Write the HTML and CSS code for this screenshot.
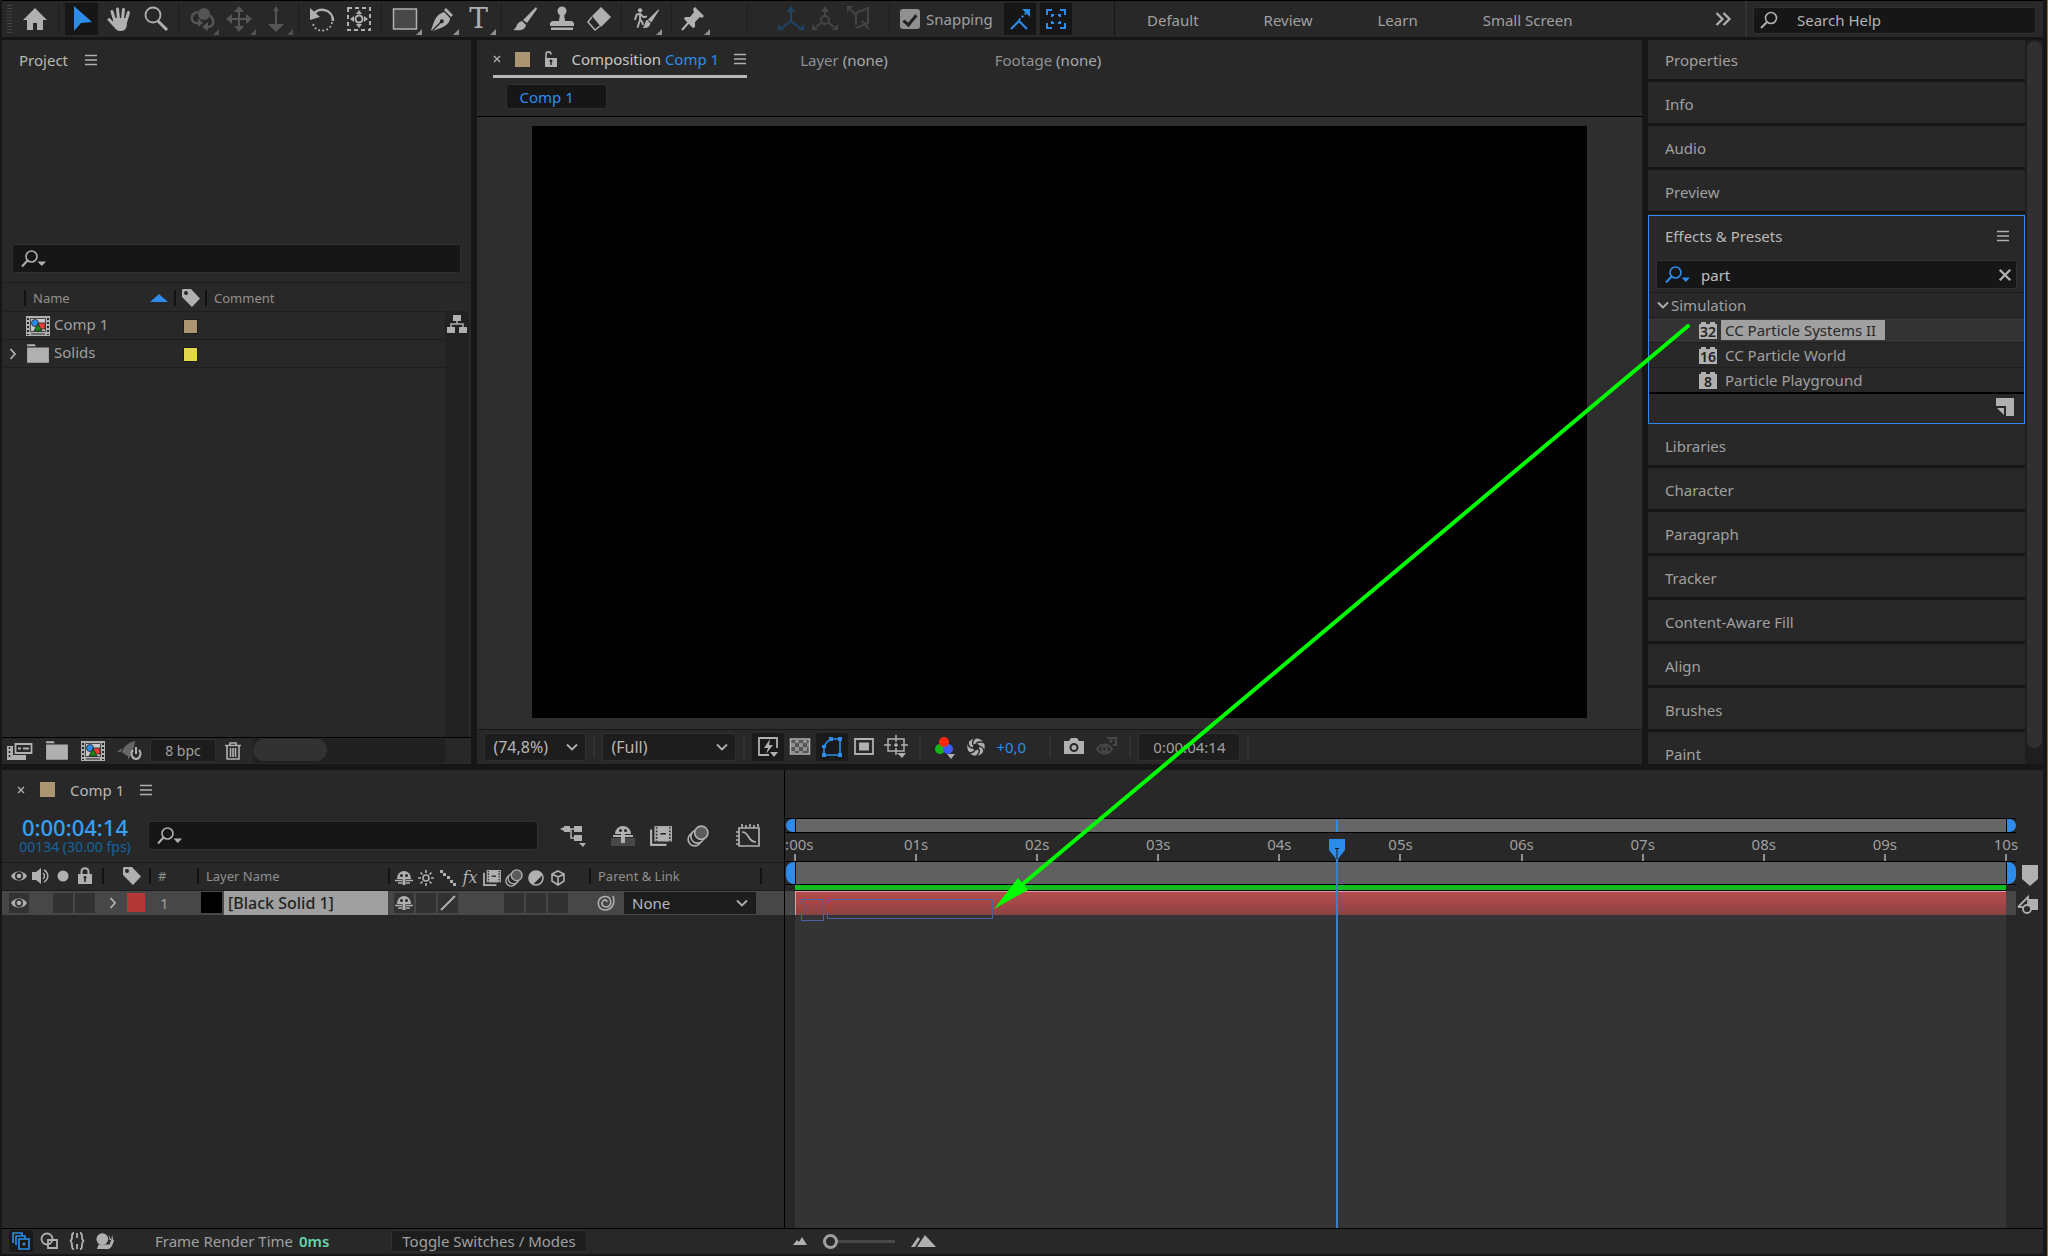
FILE: index.html
```
<!DOCTYPE html>
<html lang="en">
<head>
    <meta charset="UTF-8">
    <meta name="viewport" content="width=device-width, initial-scale=1.0">
    <title>Comp 1</title>
    <link rel="stylesheet" href="styles.css">
</head>
<body>

    <!-- shared icons -->
    <svg class="sprite" aria-hidden="true">
        <symbol id="i-search" viewBox="0 0 26 18">
            <circle cx="10.500" cy="6.500" r="5.500" fill="none" stroke="currentColor" stroke-width="1.600"/>
            <path d="M6.500 10.500 1 16.500" stroke="currentColor" stroke-width="2"/>
            <path d="M16.500 11.500h8.500l-4.200 4.500z" fill="currentColor"/>
        </symbol>
        <symbol id="i-menu" viewBox="0 0 14 12">
            <path d="M1 1.500h12M1 6h12M1 10.500h12" stroke="currentColor" stroke-width="1.600"/>
        </symbol>
        <symbol id="i-close" viewBox="0 0 8 8">
            <path d="M1 1l6 6M7 1 1 7" stroke="currentColor" stroke-width="1.400"/>
        </symbol>
        <symbol id="i-down" viewBox="0 0 12 8">
            <path d="M1 1.500l5 5 5-5" fill="none" stroke="currentColor" stroke-width="1.800"/>
        </symbol>
        <symbol id="i-right" viewBox="0 0 8 12">
            <path d="M1.500 1l4.500 5-4.500 5" fill="none" stroke="currentColor" stroke-width="1.800"/>
        </symbol>
        <symbol id="i-tag" viewBox="0 0 18 18">
            <path fill-rule="evenodd" d="M1 0h8l9 9.500-8 8.500-10-10V1zM4 2a2 2 0 1 0 0 4 2 2 0 0 0 0-4z" fill="currentColor"/>
        </symbol>
        <symbol id="i-folder" viewBox="0 0 22 18">
            <path d="M1 0h7l1 2H1zM1 3h20v14H1z" fill="currentColor"/>
        </symbol>
        <symbol id="i-comp" viewBox="0 0 24 20">
            <path d="M0 0h24v20H0z" fill="currentColor"/>
            <path d="M2 2v17M22 2v17" stroke="#282828" stroke-width="2" stroke-dasharray="2 2"/>
            <path d="M4.500 2.500h15v13h-15z" fill="#c8c8c8" stroke="#484848"/>
            <path d="M12 7h7v6h-7z" fill="#f43b35" stroke="#222" stroke-width=".800"/>
            <circle cx="9" cy="7" r="3.500" fill="#2d8ceb" stroke="#222" stroke-width=".800"/>
            <path d="M12 7.500l4 7.500H8z" fill="#128a12" stroke="#222" stroke-width=".800"/>
            <path d="M5 18h14" stroke="#282828"/>
        </symbol>
        <symbol id="i-eye" viewBox="0 0 16 12">
            <path fill-rule="evenodd" d="M0 6c3-6 13-6 16 0-3 6-13 6-16 0zM8 2a4 4 0 1 0 0 8 4 4 0 0 0 0-8z" fill="currentColor"/>
            <circle cx="8" cy="6" r="2.300" fill="currentColor"/>
        </symbol>
        <symbol id="i-shy" viewBox="0 0 18 16">
            <path d="M2 9a7 8 0 0 1 14 0z" fill="currentColor"/>
            <circle cx="6.500" cy="5.500" r="1.500" fill="#282828"/>
            <circle cx="11.500" cy="5.500" r="1.500" fill="#282828"/>
            <path d="M0 10.500h7M11 10.500h7M3 13h4M11 13h4" stroke="currentColor" stroke-width="1.500"/>
            <path d="M7.500 8h3v7h-3z" fill="currentColor"/>
        </symbol>
        <symbol id="i-film" viewBox="0 0 20 18">
            <path d="M1 3v14h14" fill="none" stroke="currentColor" stroke-width="2"/>
            <path d="M4 0h16v14H4z" fill="currentColor"/>
            <path d="M6 1v13M18 1v13" stroke="#282828" stroke-width="1.500" stroke-dasharray="1.500 1.500"/>
            <path d="M9.500 7h5" stroke="#282828" stroke-width="1.500"/>
        </symbol>
        <symbol id="i-blur" viewBox="0 0 20 20">
            <g stroke="currentColor" stroke-width="1.500" fill="#282828">
                <circle cx="7" cy="13" r="6"/>
                <circle cx="9.500" cy="10.500" r="6"/>
                <circle cx="13" cy="7" r="6" fill="#5c5c5c"/>
            </g>
        </symbol>
    </svg>

    <header class="toolbar">
        <span class="grip"></span>
        <button class="tool home" aria-label="Home"><svg class="i26" viewBox="0 0 26 26"><path d="M13 2 1 14h4v10h6v-7h4v7h6V14h4z"/></svg></button>
        <div class="group">
            <button class="tool on" aria-label="Selection"><svg class="i26" viewBox="0 0 26 26"><path d="M5 0v25l7-8 11-1z"/></svg></button>
            <button class="tool" aria-label="Hand"><svg class="i26" viewBox="0 0 26 26"><path d="M7 12h14v5c0 5-2 8-6 8s-6-2-8-6z"/><path class="line round" stroke-width="3" d="M8.500 14 6 5.500M12.500 13 11.500 3M16.500 13l1-9.500M20 15l2.500-8.500M8 19l-5-5.500"/></svg></button>
            <button class="tool" aria-label="Zoom"><svg class="i26" viewBox="0 0 26 26"><circle class="line" cx="10" cy="9" r="7.500" stroke-width="1.800"/><path class="line" stroke-width="3" d="M15 15l9 9"/></svg></button>
        </div>
        <div class="group dim">
            <button class="tool more" aria-label="Orbit camera" disabled><svg class="i26" viewBox="0 0 26 26"><circle cx="15" cy="8" r="6"/><path class="line" stroke-width="2.500" d="M9 6c-7 1-8 8-3 11h5M20 9c6 4 6 12-2 12"/><path d="M9 12v9l5-4zM19 16v9l-6-4z"/></svg></button>
            <button class="tool more" aria-label="Pan camera" disabled><svg class="i26" viewBox="0 0 26 26"><path class="line" stroke-width="2" d="M13 3v20M3 13h20"/><path d="M13 0l5 6H8zM13 26l5-6H8zM0 13l6-5v10zM26 13l-6-5v10z"/></svg></button>
            <button class="tool more" aria-label="Dolly camera" disabled><svg class="i26" viewBox="0 0 26 26"><path class="line" stroke-width="2" d="M13 2v20"/><path d="M13 0l3 5h-6zM13 26l8-8H5z"/></svg></button>
        </div>
        <div class="group">
            <button class="tool" aria-label="Rotate"><svg class="i26" viewBox="0 0 26 26"><path class="line" stroke-width="2.500" d="M4 9c5-9 20-6 20 6"/><path d="M1 2v12l10-3z"/><path class="line round" stroke-width="2" stroke-dasharray="0.100 4" d="M23 17c-2 9-16 11-19 1"/></svg></button>
            <button class="tool" aria-label="Anchor point"><svg class="i26" viewBox="0 0 26 26"><path class="line" stroke-width="2" stroke-dasharray="4 3" d="M2 2h22v22H2z"/><circle class="line" cx="13" cy="13" r="3.500" stroke-width="2"/><path d="M13 4l3 4h-6zM13 22l3-4h-6zM4 13l4-3v6zM22 13l-4-3v6z"/></svg></button>
        </div>
        <div class="group">
            <button class="tool more" aria-label="Rectangle"><svg class="i26" viewBox="0 0 26 26"><path fill="#484848" stroke="currentColor" stroke-width="1.500" d="M1.500 3h23v20h-23z"/></svg></button>
            <button class="tool more" aria-label="Pen"><svg class="i26" viewBox="0 0 26 26"><path fill-rule="evenodd" d="M15 6l6 6c0 6-6 9-12 11l-5 2-1-1 8-8a2 2 0 1 1 1 1l-8 8-2-1c3-6 3-15 13-18zM17 2l7 7-2 2-7-7z"/></svg></button>
            <button class="tool more glyph" aria-label="Type">T</button>
        </div>
        <div class="group">
            <button class="tool" aria-label="Brush"><svg class="i26" viewBox="0 0 26 26"><path d="M24 1l1 2-10 14-4-3zM10 15l4 4c-1 5-6 6-13 5 4-1 3-8 9-9z"/></svg></button>
            <button class="tool" aria-label="Clone stamp"><svg class="i26" viewBox="0 0 26 26"><circle cx="13" cy="5" r="4.500"/><path d="M11 8h4l1 7h7l2 2v3H1v-3l2-2h7zM2 21.500h22V24H2z"/></svg></button>
            <button class="tool" aria-label="Eraser"><svg class="i26" viewBox="0 0 26 26"><path d="M15 1l10 10-10 10L6 10z"/><path class="line" stroke-width="1.500" d="M6 11l-4 5 7 8 5-4"/></svg></button>
        </div>
        <div class="group roto">
            <button class="tool more" aria-label="Roto brush"><svg class="i26" viewBox="0 0 30 26"><circle cx="7" cy="3" r="2.500"/><path class="line" stroke-width="2.200" d="M7 6v8l-3 9M8 14l3 6M1 14l2-6 4-1 4 4 4-1"/><path d="M28 2l1 1-9 14-4-3zM15 14l4 4c-1 5-5 6-9 5 3-1 2-7 5-9z"/></svg></button>
        </div>
        <div class="group pin">
            <button class="tool more" aria-label="Puppet pin"><svg class="i26" viewBox="0 0 26 26"><path d="M15 1l9 9-2 2-2-1-5 5v5l-2 1-9-9 1-2h5l4-5-1-3z"/><path class="line" stroke-width="2" d="M9 16l-7 8"/></svg></button>
        </div>
        <div class="group axes">
            <button class="tool axis-on" aria-label="Local axis" disabled><svg class="i26" viewBox="0 0 26 26"><path class="line" stroke-width="2" d="M13 4v11L4 22M13 15l9 7"/><path d="M13 0l4 6H9zM0 24v-6l6 6zM26 24v-6l-6 6z"/></svg></button>
            <button class="tool" aria-label="World axis" disabled><svg class="i26" viewBox="0 0 26 26"><path class="line" stroke-width="2" d="M13 4v6M9 17l-5 4M17 17l5 4"/><circle class="line" cx="13" cy="14" r="4" stroke-width="2"/><path d="M13 0l4 6H9zM0 24v-6l6 6zM26 24v-6l-6 6z"/></svg></button>
            <button class="tool" aria-label="View axis" disabled><svg class="i26" viewBox="0 0 26 26"><path class="line" stroke-width="2" d="M4 3l6 6v10M10 7l12-5v15l-12 5M16 15l7 8"/><path d="M1 0h6l-6 6z"/></svg></button>
        </div>
        <div class="group snapping">
            <label class="snap"><input type="checkbox" checked>Snapping</label>
            <button class="tool on" aria-label="Snap beyond edges"><svg class="i24" viewBox="0 0 24 24"><path class="line" stroke-width="2.200" d="M3 22l8-8 8 8"/><path class="line" stroke-width="2" stroke-dasharray="2 2" d="M11 13l8-8"/><path d="M14 2h8v8z"/></svg></button>
            <button class="tool on" aria-label="Snap to collapsed layers"><svg class="i24" viewBox="0 0 24 24"><path class="line" stroke-width="2" d="M3 8V3h5M16 3h5v5M21 16v5h-5M8 21H3v-5M8 10V8h2M14 8h2v2M16 14v2h-2M10 16H8v-2"/></svg></button>
        </div>
        <nav class="workspaces">
            <a href="#">Default</a>
            <a href="#">Review</a>
            <a href="#">Learn</a>
            <a href="#">Small Screen</a>
        </nav>
        <button class="overflow" aria-label="More workspaces"><svg width="16" height="14" viewBox="0 0 16 14"><path class="line" stroke-width="2.200" d="M1.500 1l6 6-6 6M8.500 1l6 6-6 6"/></svg></button>
        <div class="help-wrap">
            <label class="field help">
                <svg width="18" height="18" viewBox="0 0 18 18"><circle class="line" cx="11" cy="7" r="5.500" stroke-width="1.600"/><path class="line" stroke-width="2" d="M7 11l-6 6"/></svg>
                <input type="text" placeholder="Search Help" aria-label="Search Help">
            </label>
        </div>
    </header>

    <main class="upper">

        <section class="panel project">
            <h2 class="panel-title">Project <svg class="menu"><use href="#i-menu"/></svg></h2>
            <label class="field project-search"><svg class="search"><use href="#i-search"/></svg><input type="text" aria-label="Search project"></label>
            <div class="project-list">
                <table>
                    <thead>
                        <tr>
                            <th class="c-name"><span class="col">Name</span><svg width="18" height="8" viewBox="0 0 18 8"><path d="M0 8 9 0l9 8z" fill="#2d8ceb"/></svg></th>
                            <th class="c-tag"><span class="col"><svg class="i18"><use href="#i-tag"/></svg></span></th>
                            <th><span class="col">Comment</span></th>
                        </tr>
                    </thead>
                    <tbody>
                        <tr>
                            <td class="c-name"><svg class="type"><use href="#i-comp"/></svg>Comp 1</td>
                            <td class="c-tag"><span class="swatch"></span></td>
                            <td></td>
                        </tr>
                        <tr>
                            <td class="c-name folder"><svg class="twirl"><use href="#i-right"/></svg><svg class="type"><use href="#i-folder"/></svg>Solids</td>
                            <td class="c-tag"><span class="swatch yellow"></span></td>
                            <td></td>
                        </tr>
                    </tbody>
                </table>
                <div class="flow-col">
                    <button aria-label="Project flowchart"><svg width="20" height="18" viewBox="0 0 20 18"><path d="M6 0h8v6H6zM0 12h8v6H0zM12 12h8v6h-8z"/><path class="line" stroke-width="1.500" d="M10 6v3M4 12V9h12v3"/></svg></button>
                </div>
            </div>
            <div class="project-foot">
                <button aria-label="Interpret footage"><svg width="26" height="18" viewBox="0 0 26 18"><path d="M0 4h6v9h13v5H0z"/><path class="cut" stroke-width="1.500" stroke-dasharray="2 2" d="M2.500 5v12"/><path fill="#282828" stroke="currentColor" stroke-width="1.800" d="M8.500 2h16v9h-16z"/><path class="line" stroke-width="2" d="M11 6.500h3M16 6.500h6"/></svg></button>
                <button aria-label="New folder"><svg class="type"><use href="#i-folder"/></svg></button>
                <button aria-label="New composition"><svg class="type"><use href="#i-comp"/></svg></button>
                <button aria-label="Power"><svg width="26" height="20" viewBox="0 0 26 20"><path fill="#666" d="M18 0C11 2 6 6 5 11l5 4c5-2 7-7 8-15zM5 7l-5 4h4zM11 14v5l4-7z"/><path class="line" stroke-width="2" d="M16 9c-3 3-1 9 3 9s6-6 3-9M19 6v7"/></svg></button>
                <button class="box bpc">8 bpc</button>
                <button aria-label="Delete"><svg width="16" height="18" viewBox="0 0 16 18"><path class="line" stroke-width="1.600" d="M0 3.500h16M5 3V1h6v2M2 4v13h12V4M5.500 6v9M8 6v9M10.500 6v9"/></svg></button>
                <div class="hscroll"><span></span></div>
            </div>
        </section>

        <section class="panel comp">
            <div class="tabs">
                <div class="tab active">
                    <svg class="close"><use href="#i-close"/></svg>
                    <span class="swatch"></span>
                    <svg width="13" height="16" viewBox="0 0 13 16"><path class="line" stroke-width="1.600" d="M2 7V3.500C2 0 7 0 7 3.500"/><path fill-rule="evenodd" d="M1 7h12v9H1zM7 8.500a1.500 1.500 0 0 0-.700 2.800V14h1.400v-2.700A1.500 1.500 0 0 0 7 8.500z"/></svg>
                    <span>Composition <a href="#">Comp 1</a></span>
                    <svg class="menu"><use href="#i-menu"/></svg>
                </div>
                <div class="tab">Layer <b>(none)</b></div>
                <div class="tab">Footage <b>(none)</b></div>
            </div>
            <div class="crumbs"><button class="crumb">Comp 1</button></div>
            <div class="viewer"><div class="canvas"></div></div>
            <div class="viewer-bar">
                <span class="drop zoom"><select aria-label="Magnification"><option>(74,8%)</option></select><svg class="arrow"><use href="#i-down"/></svg></span>
                <i class="sep"></i>
                <span class="drop res"><select aria-label="Resolution"><option>(Full)</option></select><svg class="arrow"><use href="#i-down"/></svg></span>
                <i class="sep"></i>
                <div class="view-icons">
                    <button class="pressed" aria-label="Fast previews"><svg class="i24" viewBox="0 0 24 24"><path class="line" stroke-width="1.800" d="M13 20H3V3h18v10"/><path d="M14 4l-6 9h4l-2 6 7-9h-4zM14 17h8l-4 5z"/></svg></button>
                    <button aria-label="Transparency grid"><svg class="i24" viewBox="0 0 24 24"><path fill="#555" stroke="currentColor" stroke-width="1.600" d="M2.500 4h19v15h-19z"/><path fill="#909090" d="M7 4h4v4H7zM15 4h4v4h-4zM3 8h4v4H3zM11 8h4v4h-4zM19 8h2v4h-2zM7 12h4v4H7zM15 12h4v4h-4zM3 16h4v3H3zM11 16h4v3h-4z"/></svg></button>
                    <button class="pressed blue" aria-label="Mask visibility"><svg class="i24" viewBox="0 0 24 24"><path class="line" stroke-width="1.600" d="M4 20V12c2-5 5-7 8-8h8v16z"/><path d="M2 18h4v4H2zM18 18h4v4h-4zM18 2h4v4h-4zM9 2h4v4H9zM2 10h4v3H2z"/></svg></button>
                    <button aria-label="Region of interest"><svg class="i24" viewBox="0 0 24 24"><path class="line" stroke-width="1.800" d="M3 4h18v15H3z"/><path d="M7 7.500h10v8H7z"/></svg></button>
                    <button aria-label="Guides"><svg class="i24" viewBox="0 0 24 24"><path class="line" stroke-width="1.500" d="M4 4h16v12H4zM12 0v7M12 13v7M0 10h7M17 10h7M10 10h4M12 8v4"/><path d="M13 18h9l-4 5z"/></svg></button>
                </div>
                <i class="sep"></i>
                <div class="view-icons">
                    <button aria-label="Channels"><svg class="i24" viewBox="0 0 24 24"><circle cx="8" cy="14" r="5" fill="#17b517"/><circle cx="16" cy="14" r="5" fill="#3a5cff"/><circle cx="12" cy="7" r="5" fill="#ff2a0d"/><path d="M15 19h8l-4 5z"/></svg></button>
                    <button aria-label="Exposure"><svg class="i24" viewBox="0 0 24 24"><circle class="line" cx="12" cy="12" r="6" stroke-width="5.500"/><path class="cut" stroke-width="1.500" d="M13 2c-4 2-5 5-4 8M21 8c-4-2-8-1-9 1M20 17c0-4-3-6-6-6M11 22c3-2 5-5 4-8M3 17c4 2 7 0 8-2M4 7c0 4 2 6 5 6"/></svg></button>
                    <a class="exposure" href="#">+0,0</a>
                </div>
                <i class="sep"></i>
                <div class="view-icons">
                    <button aria-label="Snapshot"><svg class="i24" viewBox="0 0 24 24"><path fill-rule="evenodd" d="M2 6h5l2-3h6l2 3h5v13H2zM12 8a4.500 4.500 0 1 0 0 9 4.500 4.500 0 0 0 0-9zm0 2a2.500 2.500 0 1 1 0 5 2.500 2.500 0 0 1 0-5z"/></svg></button>
                    <button class="off" aria-label="Show snapshot" disabled><svg class="i24" viewBox="0 0 24 24"><path class="line" stroke-width="2" d="M3 14c4-6 11-6 15 0-4 6-11 6-15 0zM13 3h9v7h-3"/><circle class="line" cx="10.500" cy="14" r="2.500" stroke-width="2"/><circle cx="17" cy="6" r="1.800"/></svg></button>
                </div>
                <i class="sep"></i>
                <button class="box time">0:00:04:14</button>
                <i class="sep"></i>
            </div>
        </section>

        <aside class="side">
            <div class="stack">
                <button class="fold">Properties</button>
                <button class="fold">Info</button>
                <button class="fold">Audio</button>
                <button class="fold">Preview</button>
                <section class="effects">
                    <h2 class="panel-title">Effects &amp; Presets <svg class="menu"><use href="#i-menu"/></svg></h2>
                    <label class="field effects-search"><svg class="search"><use href="#i-search"/></svg><input type="text" value="part" aria-label="Search effects"><svg class="clear"><use href="#i-close"/></svg></label>
                    <ul class="tree">
                        <li class="cat"><svg class="arrow"><use href="#i-down"/></svg>Simulation</li>
                        <li class="fx selected"><span class="badge">32</span><span class="label">CC Particle Systems II</span></li>
                        <li class="fx"><span class="badge">16</span><span class="label">CC Particle World</span></li>
                        <li class="fx"><span class="badge">8</span><span class="label">Particle Playground</span></li>
                    </ul>
                    <div class="effects-foot"><button aria-label="New preset"><svg class="i18" viewBox="0 0 18 18"><path d="M0 0h18v18h-8V8H0zM1 10h7v7z"/></svg></button></div>
                </section>
                <button class="fold">Libraries</button>
                <button class="fold">Character</button>
                <button class="fold">Paragraph</button>
                <button class="fold">Tracker</button>
                <button class="fold">Content-Aware Fill</button>
                <button class="fold">Align</button>
                <button class="fold">Brushes</button>
                <button class="fold">Paint</button>
            </div>
            <div class="vscroll"><span></span></div>
        </aside>
    </main>

    <section class="panel timeline">
        <div class="tl-body">
            <div class="layers">
                <div class="tl-tab">
                    <svg class="close"><use href="#i-close"/></svg>
                    <span class="swatch"></span>
                    <span>Comp 1</span>
                    <svg class="menu"><use href="#i-menu"/></svg>
                </div>
                <div class="tl-top">
                    <div class="clock"><strong>0:00:04:14</strong><small>00134 (30.00 fps)</small></div>
                    <label class="field tl-search"><svg class="search"><use href="#i-search"/></svg><input type="text" aria-label="Search layers"></label>
                    <div class="tl-icons">
                        <button aria-label="Mini flowchart"><svg class="i26" viewBox="0 0 26 22"><path d="M0 4l6-3v6zM4 1h6v6H4zM14 1h8v6h-8zM14 10h8v6h-8zM19 18h7l-3 4z"/><path class="line" stroke-width="1.500" d="M8 4h6M11 4v9h4"/></svg></button>
                        <button aria-label="Shy layers"><svg width="24" height="20" viewBox="0 0 24 20"><path d="M0 12h24v8H0z" fill="#484848"/><path d="M4 8a8 8 0 0 1 16 0zM10 8h4v9h-4zM2 9h20v2H2z"/><circle cx="9.500" cy="4.500" r="1.500" fill="#282828"/><circle cx="14.500" cy="4.500" r="1.500" fill="#282828"/></svg></button>
                        <button aria-label="Frame blending"><svg class="i22"><use href="#i-film"/></svg></button>
                        <button aria-label="Motion blur"><svg class="i22"><use href="#i-blur"/></svg></button>
                        <button aria-label="Graph editor"><svg width="24" height="24" viewBox="0 0 24 24"><path class="line" stroke-width="1.700" d="M3 4h20v18H3zM6 8c8 0 5 10 14 10M6 0v4M10 1v3M14 0v3M18 1v3M22 0v3M0 8h3M0 12h3M0 16h3M0 20h3"/></svg></button>
                    </div>
                </div>
                <div class="grid-row head">
                    <span class="av">
                        <svg class="eye"><use href="#i-eye"/></svg>
                        <svg width="18" height="18" viewBox="0 0 18 18"><path d="M0 5h4l5-4v16l-5-4H0z"/><path class="line" stroke-width="1.500" d="M11 6c2 2 2 4 0 6M12 3c5 3 5 9 0 12"/></svg>
                        <svg width="12" height="12" viewBox="0 0 12 12"><circle cx="6" cy="6" r="5.500"/></svg>
                        <svg width="14" height="18" viewBox="0 0 14 18"><path class="line" stroke-width="2" d="M3.500 8V5c0-5 7-5 7 0v3"/><path fill-rule="evenodd" d="M0 7h14v10H0zM7 9a1.500 1.500 0 0 0-.800 2.800V15h1.600v-3.200A1.500 1.500 0 0 0 7 9z"/></svg>
                    </span>
                    <span class="col tagcol"><svg class="i18"><use href="#i-tag"/></svg></span>
                    <span class="col">#</span>
                    <span class="col">Layer Name</span>
                    <span class="col switches">
                        <svg width="18" height="16"><use href="#i-shy"/></svg>
                        <svg width="16" height="16" viewBox="0 0 16 16"><circle class="line" cx="8" cy="8" r="3" stroke-width="1.600"/><path class="line" stroke-width="1.600" d="M8 0v3M8 13v3M0 8h3M13 8h3M2.500 2.500l2 2M11.500 11.500l2 2M13.500 2.500l-2 2M4.500 11.500l-2 2"/></svg>
                        <svg width="16" height="16" viewBox="0 0 16 16"><path d="M0 0h3v3H0zM3 3h3v3H3zM7 6h3v3H7zM10 10h3v3h-3zM13 13h3v3h-3z"/></svg>
                        <em>fx</em>
                        <svg width="18" height="16"><use href="#i-film"/></svg>
                        <svg width="18" height="18"><use href="#i-blur"/></svg>
                        <svg width="16" height="16" viewBox="0 0 16 16"><circle class="line" cx="8" cy="8" r="7" stroke-width="1.600"/><path d="M3 3a7 7 0 0 0 0 10 7 7 0 0 0 2 1.500L14.500 5A7 7 0 0 0 3 3z"/></svg>
                        <svg width="16" height="16" viewBox="0 0 16 16"><path class="line" stroke-width="1.600" d="M8 1l6 3v7l-6 4-6-4V4zM2 4l6 3 6-3M8 7v8"/></svg>
                    </span>
                    <span class="col">Parent &amp; Link</span>
                    <span class="col"></span>
                </div>
                <div class="grid-row layer">
                    <span class="av">
                        <button class="cell" aria-label="Visible"><svg class="eye"><use href="#i-eye"/></svg></button>
                        <i></i>
                        <button class="cell" aria-label="Solo"></button>
                        <button class="cell" aria-label="Lock"></button>
                    </span>
                    <span class="tagcol"><svg class="twirl"><use href="#i-right"/></svg><span class="swatch red"></span></span>
                    <span class="num">1</span>
                    <span class="layer-name"><i></i><b>[Black Solid 1]</b></span>
                    <span class="switches">
                        <button class="cell" aria-label="Shy"><svg width="18" height="16"><use href="#i-shy"/></svg></button>
                        <button class="cell" aria-label="Collapse"></button>
                        <button class="cell" aria-label="Quality"><svg width="16" height="16" viewBox="0 0 16 16"><path class="line" stroke-width="2" d="M1 15 15 1"/></svg></button>
                        <i></i>
                        <i></i>
                        <button class="cell" aria-label="Motion blur"></button>
                        <button class="cell" aria-label="Adjustment"></button>
                        <button class="cell" aria-label="3D"></button>
                    </span>
                    <span class="parent">
                        <svg width="18" height="16" viewBox="0 0 18 16"><path class="line" stroke-width="1.600" d="M16 1c3 8-2 14-8 14S0 9 2 5s9-5 11-1 0 8-4 8-5-4-3-6 4-1 4 1"/></svg>
                        <span class="drop link"><select aria-label="Parent"><option>None</option></select><svg class="arrow"><use href="#i-down"/></svg></span>
                    </span>
                </div>
            </div>

            <div class="graph">
                <div class="navigator"><i></i><span></span><i class="end"></i></div>
                <div class="ruler">
                    <div class="tick"><span>0:00s</span></div>
                    <div class="tick"><span>01s</span></div>
                    <div class="tick"><span>02s</span></div>
                    <div class="tick"><span>03s</span></div>
                    <div class="tick"><span>04s</span></div>
                    <div class="tick"><span>05s</span></div>
                    <div class="tick"><span>06s</span></div>
                    <div class="tick"><span>07s</span></div>
                    <div class="tick"><span>08s</span></div>
                    <div class="tick"><span>09s</span></div>
                    <div class="tick"><span>10s</span></div>
                </div>
                <div class="workarea"><i></i><span></span><i class="end"></i></div>
                <div class="cache"></div>
                <div class="track"><div class="clip"></div></div>
                <div class="lanes"></div>
                <div class="overlay">
                    <div class="playhead" style="left: 44.700%">
                        <svg width="16" height="20" viewBox="0 0 16 20"><path d="M0 0h16v11l-7 9H7l-7-9z"/><path stroke="#1a1a1a" d="M6 9.500h4M8 10v10"/></svg>
                    </div>
                    <div class="ghost"><i></i><i></i></div>
                </div>
            </div>

            <div class="markers">
                <svg width="16" height="22" viewBox="0 0 16 22"><path d="M0 0h16v14l-8 7-8-7z"/></svg>
                <svg width="22" height="20" viewBox="0 0 22 20"><path class="line" stroke-width="1.800" d="M1 12 11 2v8"/><path d="M12 4h9v11h-9z"/><circle cx="10" cy="14" r="4" fill="#282828" stroke="currentColor" stroke-width="1.800"/><path class="line" stroke-width="1.800" d="M1 12h5"/></svg>
            </div>
        </div>

        <footer class="status">
            <div class="modes">
                <button class="pressed blue" aria-label="Layer switches"><svg class="i18" viewBox="0 0 18 18"><path class="line" stroke-width="1.600" d="M1 11V1h9v3M4 13V4h9v3M7 7h10v10H7z"/><circle cx="12" cy="12" r="1.500"/></svg></button>
                <button aria-label="Transfer controls"><svg class="i18" viewBox="0 0 18 18"><circle class="line" cx="7" cy="7" r="5.500" stroke-width="1.800"/><path class="line" stroke-width="1.800" d="M8 8h9v8H8z"/></svg></button>
                <button aria-label="In and out"><svg class="i18" viewBox="0 0 18 18"><path class="line" stroke-width="1.800" d="M6 1C2 1 6 8 2 9c4 1 0 8 4 8M12 1c4 0 0 7 4 8-4 1 0 8-4 8M9 1v5M9 12v5"/></svg></button>
                <button aria-label="Render time"><svg class="i18" viewBox="0 0 20 18"><circle cx="7" cy="7" r="6.500"/><path d="M3 13h12l2-5h3c-1 5-3 9-6 10H1zM14 2l1 6h2zM18 2l-1 6h2z"/></svg></button>
            </div>
            <span class="render">Frame Render Time <b>0ms</b></span>
            <button class="box toggle">Toggle Switches / Modes</button>
            <div class="time-zoom">
                <svg width="14" height="8" viewBox="0 0 14 8"><path d="M0 8l4-5 2 2 3-5 5 8z"/></svg>
                <input type="range" min="0" max="100" value="0" aria-label="Time zoom">
                <svg width="26" height="12" viewBox="0 0 26 12"><path d="M0 12 7 2l2 2-5 8zM6 12 14 0l11 12z"/></svg>
            </div>
        </footer>
    </section>

    <!-- drag hint from the preset to the layer -->
    <svg class="arrow-hint" viewBox="0 0 2048 1256" preserveAspectRatio="none">
        <path d="M1688 326 1018 888" stroke="#00ff00" stroke-width="4" stroke-linecap="round"/>
        <path d="M994 909 1018 878 1028 890z" fill="#00ff00"/>
    </svg>

</body>
</html>
```
FILE: styles.css
```
* {
    box-sizing: border-box;
}
body {
    margin: 0;
    height: 100vh;
    padding: 0 4px 0 2px;
    display: grid;
    grid-template-rows: 40px minmax(0, 3fr) minmax(0, 2fr);
    grid-template-columns: minmax(0, 1fr);
    background: #161616;
    border-right: 1px solid #8a7455;
    color: #a0a0a0;
    font-family: "Noto Sans", sans-serif;
    font-size: 15px;
    line-height: 20px;
    overflow: hidden;
}
button, input, select {
    font: inherit;
    color: inherit;
    background: none;
    border: 0;
    padding: 0;
    margin: 0;
}
a {
    color: inherit;
    text-decoration: none;
}
h2, ul {
    margin: 0;
    padding: 0;
    font-weight: 400;
    font-size: 15px;
    list-style: none;
}
svg {
    flex: none;
    fill: #b0b0b0;
    color: #b0b0b0;
    overflow: visible;
}
button {
    display: flex;
    align-items: center;
    justify-content: center;
}
.sprite {
    position: absolute;
    width: 0;
    height: 0;
}
.line {
    fill: none;
    stroke: currentColor;
}
.round {
    stroke-linecap: round;
}
.cut {
    fill: none;
    stroke: #282828;
}
.i26 { width: 26px; height: 26px; }
.i24 { width: 24px; height: 24px; }
.i22 { width: 22px; height: 22px; }
.i18 { width: 18px; height: 18px; }
.menu { width: 14px; height: 12px; }
.close { width: 8px; height: 8px; }
.search { width: 26px; height: 18px; }
.arrow { width: 12px; height: 8px; }
.twirl { width: 8px; height: 12px; }
.type { width: 24px; height: 20px; }
.eye { width: 16px; height: 12px; }
.swatch {
    display: inline-block;
    flex: none;
    width: 15px;
    height: 15px;
    background: #ab9674;
}
.yellow { background: #e3d84b; }
.red { background: #b53838; }
.field {
    display: flex;
    align-items: center;
    gap: 10px;
    padding: 0 8px;
    height: 29px;
    background: #161616;
    border: 1px solid #303030;
    border-radius: 3px;
}
.field input {
    flex: 1;
    min-width: 0;
    outline: none;
    color: #c0c0c0;
}
.field input::placeholder {
    color: #b4b4b4;
    opacity: 1;
}
.box {
    background: #1d1d1d;
    border: 1px solid #303030;
    border-radius: 3px;
}
.panel {
    background: #282828;
    min-width: 0;
}
.sep {
    width: 2px;
    height: 22px;
    background: #323232;
}
.drop {
    display: grid;
    align-items: center;
    color: #b8b8b8;
}
.drop select, .drop svg {
    grid-area: 1 / 1;
}
.drop select {
    appearance: none;
    height: 28px;
    padding: 0 8px;
    background: #1d1d1d;
    border: 1px solid #303030;
    border-radius: 3px;
}
.drop svg {
    justify-self: end;
    margin-right: 8px;
    pointer-events: none;
}

/* toolbar */
.toolbar {
    display: flex;
    align-items: center;
    height: 40px;
    background: #282828;
    border-top: 1px solid #000;
    border-bottom: 3px solid #161616;
}
.grip {
    width: 5px;
    height: 28px;
    margin-left: 5px;
    background: repeating-linear-gradient(#444 0 1px, transparent 1px 3px);
}
.tool {
    position: relative;
    width: 37px;
    height: 32px;
}
.home {
    width: 46px;
}
.tool.on {
    background: #161616;
    background-clip: content-box;
    padding: 0 2px;
}
.tool.on svg, .blue svg {
    fill: #2d8ceb;
    color: #2d8ceb;
}
.more::after {
    content: "";
    position: absolute;
    right: 1px;
    bottom: 0;
    border: 3px solid;
    border-color: transparent #909090 #909090 transparent;
}
.glyph {
    font-family: "DejaVu Serif", serif;
    font-size: 28px;
    color: #b0b0b0;
}
.group {
    display: flex;
    align-items: center;
    height: 32px;
    padding: 0 4px;
    border-left: 1px solid #1e1e1e;
}
.group.dim svg {
    fill: #555;
    color: #555;
}
.group.dim .more::after {
    border-color: transparent #505050 #505050 transparent;
}
.group.roto {
    width: 50px;
    padding: 0 8px;
}
.group.pin {
    width: 76px;
    padding: 0 2px;
}
.group.axes {
    width: 142px;
    padding: 0 12px 0 26px;
}
.axes .tool {
    width: 34px;
}
.axes svg {
    fill: #444;
    color: #444;
}
.axes .axis-on svg {
    fill: #1f4468;
    color: #1f4468;
}
.snapping {
    padding-left: 10px;
}
.snapping .tool {
    width: 36px;
}
.snap {
    display: flex;
    align-items: center;
    gap: 6px;
    width: 102px;
}
.snap input {
    appearance: none;
    width: 20px;
    height: 20px;
    background: #909090;
    border-radius: 3px;
    display: grid;
    place-items: center;
}
.snap input::after {
    content: "";
    width: 5px;
    height: 11px;
    border: solid #222;
    border-width: 0 3px 3px 0;
    transform: rotate(40deg);
}
.workspaces {
    display: flex;
    align-items: center;
    gap: 65px;
    height: 36px;
    margin-left: 36px;
    padding: 2px 0 0 32px;
    border-left: 1px solid #161616;
}
.overflow {
    margin-left: auto;
    margin-right: 14px;
}
.help-wrap {
    display: flex;
    align-items: center;
    height: 36px;
    width: 298px;
    padding: 2px 7px 0 6px;
    border-left: 2px solid #323232;
}
.help {
    flex: 1;
    gap: 19px;
    height: 27px;
    padding: 0 6px;
}

/* upper panels */
.upper {
    display: grid;
    grid-template-columns: 23% minmax(0, 1fr) 395px;
    column-gap: 6px;
    padding-bottom: 6px;
    min-height: 0;
}
.panel-title {
    display: flex;
    align-items: center;
    gap: 16px;
    height: 40px;
    color: #b8b8b8;
}
.project {
    display: flex;
    flex-direction: column;
}
.project .panel-title {
    padding-left: 17px;
}
.project-search {
    margin: 164px 10px 9px;
}
.project-list {
    flex: 1;
    display: flex;
    align-items: stretch;
    margin: 0 2px;
    border-top: 1px solid #1c1c1c;
}
table {
    flex: 1;
    align-self: flex-start;
    table-layout: fixed;
    border-collapse: collapse;
}
th, td {
    height: 28px;
    padding: 0;
    text-align: left;
    font-weight: 400;
    border-bottom: 1px solid #1e1e1e;
    vertical-align: middle;
}
th {
    font-size: 13px;
    color: #909090;
}
.col {
    display: inline-flex;
    align-items: center;
    height: 16px;
    padding-left: 7px;
    border-left: 2px solid #111;
    vertical-align: middle;
}
.c-name {
    width: 170px;
    padding-left: 22px;
}
th.c-name {
    padding-left: 20px;
}
th.c-name svg {
    margin-left: 80px;
    vertical-align: middle;
}
.c-name .type {
    margin-right: 4px;
    vertical-align: middle;
}
.c-name.folder {
    padding-left: 5px;
}
.c-name .twirl {
    margin-right: 9px;
    vertical-align: middle;
}
.c-tag {
    width: 31px;
}
.c-tag .col {
    padding-left: 6px;
}
.c-tag .swatch {
    margin-left: 9px;
    vertical-align: middle;
    border: 1px solid #1c1c1c;
}
.flow-col {
    width: 24px;
    margin-top: 28px;
    padding: 4px 2px;
    background: #222;
}
.project-foot {
    display: flex;
    align-items: center;
    gap: 12px;
    height: 27px;
    padding-left: 5px;
    border-top: 1px solid #000;
}
.bpc {
    width: 66px;
    height: 23px;
    font-size: 14px;
    margin: 0 -3px 0 -5px;
}
.hscroll {
    flex: 1;
    height: 24px;
    margin-right: 26px;
    background: #202020;
}
.hscroll span {
    display: block;
    width: 74px;
    height: 22px;
    border-radius: 11px;
    background: #323232;
}

/* composition */
.comp {
    display: flex;
    flex-direction: column;
}
.tabs {
    display: flex;
    gap: 53px;
    padding-left: 16px;
    color: #909090;
}
.tabs b {
    font-weight: 400;
    color: #a8a8a8;
}
.tab {
    height: 38px;
    line-height: 40px;
}
.tab.active {
    display: flex;
    align-items: center;
    gap: 14px;
    padding-top: 3px;
    color: #c8c8c8;
    border-bottom: 3px solid #b8b8b8;
}
.tab a, .crumb, .exposure {
    color: #2d8ceb;
}
.tab + .tab + .tab {
    margin-left: 54px;
}
.crumbs {
    height: 39px;
    padding: 6px 29px;
    border-bottom: 1px solid #000;
}
.crumb {
    width: 101px;
    height: 25px;
    justify-content: flex-start;
    padding-left: 12px;
    background: #161616;
    border: 1px solid #303030;
    border-radius: 3px;
}
.viewer {
    flex: 1;
    display: flex;
    padding: 9px 55px 11px;
    background: #2e2e2e;
    border-bottom: 1px solid #161616;
}
.canvas {
    flex: 1;
    background: #000;
}
.viewer-bar {
    display: flex;
    align-items: center;
    gap: 7px;
    height: 34px;
    padding-left: 7px;
}
.viewer-bar select {
    font-size: 16px;
}
.zoom { width: 102px; }
.res { width: 134px; }
.view-icons {
    display: flex;
    align-items: center;
}
.view-icons button {
    width: 32px;
    height: 28px;
}
.pressed {
    background: #1a1a1a;
    border-radius: 3px;
}
.off svg {
    fill: #484848;
    color: #484848;
}
.exposure {
    width: 50px;
    padding-left: 4px;
}
.time {
    width: 102px;
    height: 28px;
}

/* right column */
.side {
    display: flex;
    min-height: 0;
}
.stack {
    width: 377px;
    background: #282828;
    overflow: hidden;
}
.fold {
    width: 100%;
    height: 44px;
    padding: 3px 0 0 17px;
    justify-content: flex-start;
    border-bottom: 3px solid #161616;
}
.fold:first-child {
    height: 42px;
    padding-top: 0;
}
.effects {
    height: 209px;
    margin-top: 1px;
    border: 1px solid #2d8ceb;
}
.effects .panel-title {
    justify-content: space-between;
    height: 40px;
    padding: 0 14px 0 16px;
}
.effects-search {
    margin: 4px 7px 3px;
}
.effects-search .search {
    color: #2d8ceb;
}
.effects-search .clear {
    width: 14px;
    height: 14px;
    margin-right: -4px;
}
.tree li {
    display: flex;
    align-items: center;
    height: 25px;
    border-top: 1px solid #1e1e1e;
}
.cat {
    gap: 2px;
    padding-left: 8px;
}
.fx {
    gap: 4px;
    padding-left: 50px;
}
.fx.selected {
    background: #333;
}
.fx .label {
    padding: 0 4px;
}
.fx.selected .label {
    padding-right: 9px;
    background: #a0a0a0;
    color: #282828;
}
/* plugin brick with two studs on top */
.badge {
    width: 18px;
    height: 17px;
    padding-top: 2px;
    background:
        linear-gradient(#b0b0b0, #b0b0b0) 2px 0 / 5px 2px no-repeat,
        linear-gradient(#b0b0b0, #b0b0b0) 11px 0 / 5px 2px no-repeat,
        linear-gradient(#b0b0b0, #b0b0b0) 0 2px / 18px 15px no-repeat;
    color: #222;
    font-size: 14px;
    line-height: 15px;
    font-weight: 600;
    text-align: center;
}
.effects-foot {
    display: flex;
    justify-content: flex-end;
    padding: 4px 10px;
    border-top: 2px solid #000;
}
.vscroll {
    width: 18px;
    padding: 1px 1px 16px 2px;
    background: #1e1e1e;
}
.vscroll span {
    display: block;
    height: 100%;
    border-radius: 7px;
    background: #303030;
}

/* timeline */
.timeline {
    display: flex;
    flex-direction: column;
    min-height: 0;
    border-bottom: 2px solid #161616;
}
.tl-body {
    flex: 1;
    display: flex;
    min-height: 0;
}
.layers {
    width: 783px;
    border-right: 1px solid #000;
}
.tl-tab {
    display: flex;
    align-items: center;
    height: 40px;
    gap: 15px;
    padding-left: 15px;
    color: #b8b8b8;
}
.tl-top {
    display: flex;
    align-items: center;
    height: 53px;
    padding: 0 24px 0 16px;
    border-bottom: 1px solid #1c1c1c;
}
.clock {
    display: flex;
    flex-direction: column;
    align-items: center;
    width: 114px;
    margin-right: 16px;
}
.clock strong {
    font-size: 22px;
    line-height: 22px;
    font-weight: 500;
    color: #36a0f5;
}
.clock small {
    font-size: 14px;
    line-height: 18px;
    white-space: nowrap;
    color: #17639c;
}
.tl-search {
    flex: 1;
}
.tl-icons {
    display: flex;
    align-items: center;
    gap: 15px;
    margin-left: 22px;
}
.tl-icons button:first-child {
    margin-right: 10px;
}
.tl-icons button:nth-child(4) {
    margin-right: 12px;
}
.grid-row {
    display: grid;
    grid-template-columns: 94px 47px 48px 191px 201px 171px 1fr;
    align-items: center;
    height: 28px;
    padding-left: 6px;
}
.head {
    font-size: 13px;
    color: #909090;
    border-bottom: 1px solid #1c1c1c;
}
.layer {
    height: 24px;
    background: #474747;
}
.av, .switches {
    display: grid;
    grid-template-columns: repeat(4, 22px);
    place-items: center;
    justify-content: start;
}
.switches {
    grid-template-columns: repeat(8, 22px);
}
.head .switches {
    padding-left: 3px;
}
.layer .switches {
    padding-left: 5px;
}
.cell {
    width: 20px;
    height: 20px;
    background: #323232;
}
.switches em {
    font-family: "DejaVu Serif", serif;
    font-size: 16px;
    color: #b0b0b0;
}
.tagcol {
    display: flex;
    align-items: center;
    justify-content: flex-end;
    gap: 10px;
    padding-right: 4px;
}
.head .tagcol {
    padding-right: 8px;
}
.tagcol .swatch {
    width: 18px;
    height: 19px;
}
.layer .num {
    padding-left: 11px;
}
.layer-name {
    display: flex;
    gap: 2px;
    height: 24px;
    padding-left: 4px;
    color: #222;
}
.layer-name i {
    width: 21px;
    height: 21px;
    margin-top: 1px;
    background: #000;
}
.layer-name b {
    flex: 1;
    padding-left: 4px;
    background: #a0a0a0;
    font-size: 16px;
    font-weight: 500;
    line-height: 24px;
}
.parent {
    display: flex;
    align-items: center;
    gap: 9px;
    padding-left: 8px;
}
.link {
    width: 132px;
}
.link select {
    height: 22px;
    border-radius: 0;
    border: 0;
}

/* time graph */
.graph {
    flex: 1;
    position: relative;
    display: flex;
    flex-direction: column;
    padding: 48px 4px 0 0;
    margin-right: -4px;
    overflow: hidden;
}
.navigator, .workarea {
    display: flex;
    height: 15px;
    border: 1px solid #000;
    border-width: 1px 0;
    padding-left: 1px;
}
.navigator i, .workarea i {
    width: 9px;
    background: #2d8ceb;
    border-radius: 8px 0 0 8px;
}
.navigator span, .workarea span {
    flex: 1;
    background: #666;
    border: 1px solid #000;
    border-width: 0 1px;
}
.navigator i.end, .workarea i.end {
    border-radius: 0 8px 8px 0;
}
.ruler {
    display: flex;
    justify-content: space-between;
    height: 28px;
    padding: 0 10px;
}
.tick {
    width: 0;
    display: flex;
    flex-direction: column;
    align-items: center;
    justify-content: flex-end;
    white-space: nowrap;
    line-height: 20px;
}
.tick::after {
    content: "";
    width: 2px;
    height: 7px;
    flex: none;
    background: #909090;
}
.workarea {
    height: 24px;
}
.workarea span {
    background: #606060;
}
.cache {
    height: 6px;
    margin: 0 10px;
    background: #13bd1d;
    border-bottom: 1px solid #000;
}
.track {
    height: 24px;
    padding: 0 10px;
    background: #474747;
}
.clip {
    height: 24px;
    border-top: 1px solid #d9a0a0;
    border-left: 1px solid #d9a0a0;
    background: linear-gradient(#b24c4c, #a04646 60%, #8a4242);
}
.lanes {
    flex: 1;
    margin: 0 10px;
    background: #343434;
}
.overlay {
    position: absolute;
    inset: 50px 14px 0 10px;
    pointer-events: none;
}
.playhead {
    position: absolute;
    top: 0;
    bottom: 0;
    width: 2px;
    background: linear-gradient(#2d8ceb 12px, transparent 12px 34px, #3a80c8 34px);
}
.playhead svg {
    position: absolute;
    left: -7px;
    top: 19px;
    fill: #2d8ceb;
}
.ghost {
    position: absolute;
    top: 79px;
    left: 6px;
    display: flex;
    gap: 3px;
}
.ghost i {
    width: 23px;
    height: 22px;
    border: 1px solid #4c62a0;
}
.ghost i + i {
    width: 166px;
    height: 20px;
}
.markers {
    width: 27px;
    padding: 95px 0 0 6px;
    display: flex;
    flex-direction: column;
    gap: 8px;
}
.markers svg + svg {
    margin-left: -5px;
}

.status {
    display: flex;
    align-items: center;
    height: 26px;
    border-top: 1px solid #000;
}
.modes {
    display: flex;
    gap: 4px;
    margin-left: 7px;
}
.modes button {
    width: 24px;
    height: 22px;
}
.render {
    width: 236px;
    margin-left: 38px;
}
.render b {
    margin-left: 2px;
    font-weight: 600;
    color: #63d6b0;
}
.toggle {
    width: 196px;
    height: 22px;
    white-space: nowrap;
}
.time-zoom {
    display: flex;
    align-items: center;
    gap: 16px;
    margin-left: 206px;
}
.time-zoom input {
    appearance: none;
    width: 72px;
    height: 14px;
    background: linear-gradient(#484848, #484848) center / 100% 3px no-repeat;
}
.time-zoom input::-webkit-slider-thumb {
    appearance: none;
    width: 15px;
    height: 15px;
    background: #282828;
    border: 3px solid #a0a0a0;
    border-radius: 50%;
}
.arrow-hint {
    position: absolute;
    inset: 0;
    width: 100%;
    height: 100%;
    pointer-events: none;
}
```
